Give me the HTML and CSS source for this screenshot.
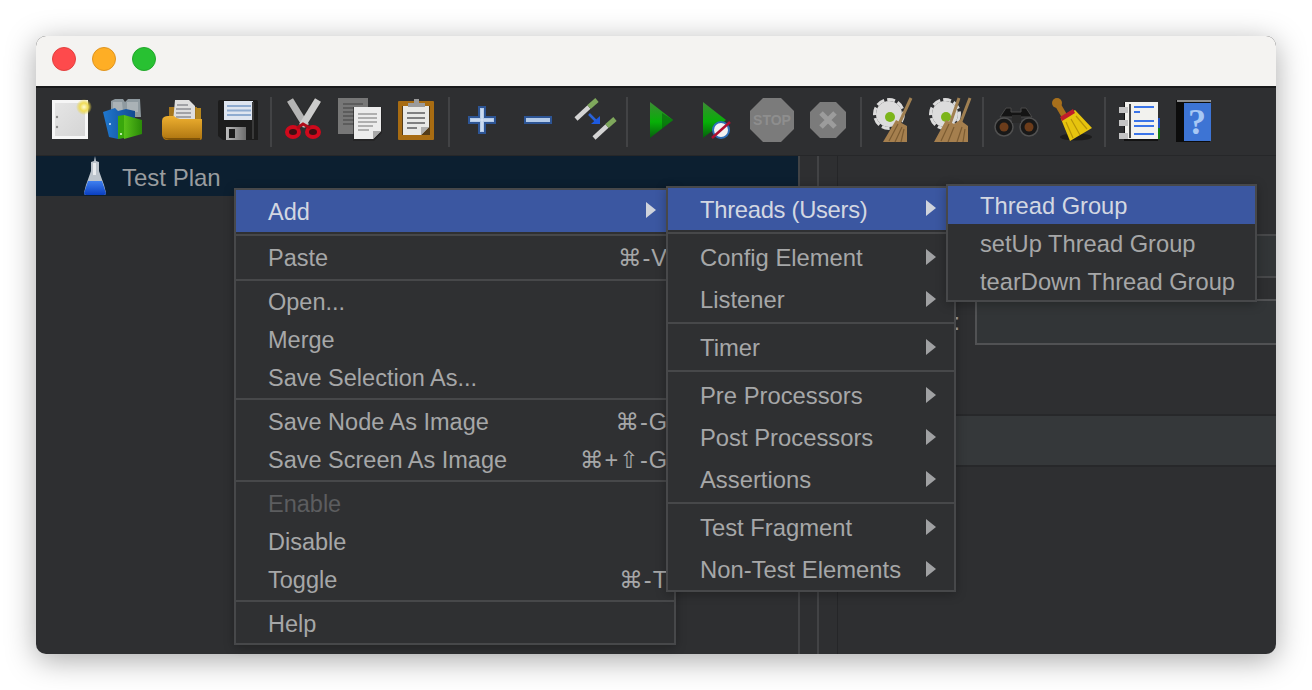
FILE: index.html
```html
<!DOCTYPE html>
<html lang="en">
<head>
<meta charset="utf-8">
<title>Apache JMeter</title>
<link rel="stylesheet" href="styles.css">
</head>
<body>
<div class="window">
  <header class="titlebar">
    <span class="light red"></span><span class="light yellow"></span><span class="light green"></span>
  </header>
  <nav class="toolbar">
    <span class="tool"><svg class="icon" viewBox="0 0 44 44"><defs><linearGradient id="g1" x1="0" y1="0" x2="1" y2="1"><stop offset="0" stop-color="#e6e6e6"/><stop offset="1" stop-color="#d4d4d4"/></linearGradient><radialGradient id="g1b"><stop offset="0" stop-color="#fffbd0"/><stop offset=".5" stop-color="#f0dc58"/><stop offset="1" stop-color="#e8d23c" stop-opacity="0"/></radialGradient></defs><rect x="4" y="3" width="36" height="38" fill="#202020"/><rect x="5.5" y="3.5" width="33" height="36" fill="url(#g1)" stroke="#f6f6f6" stroke-width="3"/><circle cx="9" cy="19" r="1.2" fill="#8a8a8a"/><circle cx="9" cy="29" r="1.2" fill="#8a8a8a"/><circle cx="36" cy="9" r="8" fill="url(#g1b)"/></svg></span>
    <span class="tool"><svg class="icon" viewBox="0 0 44 44"><defs><linearGradient id="g2" x1="0" y1="0" x2="1" y2="0"><stop offset="0" stop-color="#1f78d0"/><stop offset="1" stop-color="#124a90"/></linearGradient><linearGradient id="g2b" x1="0" y1="0" x2="1" y2="0"><stop offset="0" stop-color="#58c01a"/><stop offset="1" stop-color="#2a8a08"/></linearGradient></defs><path d="M7 3l4-2h8l2 3 3-3h12l1 18H7z" fill="#8f9aa0"/><path d="M9 4h9l1 10H9zM23 4h11l0 10H23z" fill="#aab2b6"/><path d="M-1 14l12-4 3 3 8-2 9 2v24L14 41l-9-2z" fill="url(#g2)"/><path d="M14 18l6-1v23l-6 1z" fill="#39a70c"/><path d="M20 17l18 5v14l-18 5z" fill="url(#g2b)"/><circle cx="17" cy="36" r="1" fill="#e8ffe0"/><circle cx="6" cy="26" r="1" fill="#cfe4ff"/></svg></span>
    <span class="tool"><svg class="icon" viewBox="0 0 44 44"><defs><linearGradient id="g3" x1="0" y1="0" x2="0" y2="1"><stop offset="0" stop-color="#eeb030"/><stop offset="1" stop-color="#ad7410"/></linearGradient></defs><path d="M9 9h28v14H9z" fill="#a5761c"/><rect x="36" y="10" width="5" height="24" fill="#b5861e"/><path d="M15 2h14l6 6v16H13z" fill="#dedede"/><path d="M17 7h11M16 11h15M16 15h15M16 19h15" stroke="#8d8f94" stroke-width="1.4"/><path d="M4 19q2-1 4-1l6 0q3 3 6 3h22v19q0 2-2 2H7q-4 0-5-5v-14q0-3 2-4z" fill="url(#g3)"/><path d="M3 39q3 3 6 3h31v-2H6z" fill="#7e5208"/></svg></span>
    <span class="tool"><svg class="icon" viewBox="0 0 44 44"><defs><linearGradient id="g4" x1="0" y1="0" x2="1" y2="0"><stop offset="0" stop-color="#bcbcbc"/><stop offset="1" stop-color="#6c6c6c"/></linearGradient></defs><path d="M4 2h36q2 0 2 2v38H7l-5-4V4q0-2 2-2z" fill="#1c1c1c"/><rect x="8" y="3" width="29" height="19" fill="#dee5f0"/><path d="M11 8h24M11 12.500h24M11 17h24" stroke="#8eabd0" stroke-width="2"/><rect x="10" y="29" width="20" height="13" fill="url(#g4)"/><rect x="13" y="31" width="6" height="9" fill="#1c1c1c"/><rect x="36" y="4" width="2" height="37" fill="#3a3a3a"/></svg></span>
    <span class="sep"></span>
    <span class="tool"><svg class="icon" viewBox="0 0 44 44"><path d="M8 2L24 28" stroke="#2c2c2c" stroke-width="9"/><path d="M36 2L20 28" stroke="#2c2c2c" stroke-width="9"/><path d="M8 2L24 28" stroke="#b4b4b4" stroke-width="7"/><path d="M36 2L20 28" stroke="#cccccc" stroke-width="7"/><ellipse cx="11" cy="34" rx="6" ry="5" fill="#3a1013" stroke="#d0091c" stroke-width="4"/><ellipse cx="31" cy="34" rx="6" ry="5" fill="#3a1013" stroke="#d0091c" stroke-width="4"/><path d="M15 30l6-4 7 4" fill="none" stroke="#b00a18" stroke-width="3"/></svg></span>
    <span class="tool"><svg class="icon" viewBox="0 0 44 44"><rect x="0" y="0" width="30" height="36" fill="#777"/><path d="M5 6h20M5 10h20M5 14h20M5 18h15M5 22h15M5 26h15" stroke="#5c5c5c" stroke-width="2"/><path d="M15 9h29v26l-8 8H15z" fill="#1f1f1f" opacity=".6"/><path d="M16 9h27v24l-8 8H16z" fill="#ececec"/><path d="M20 16h19M20 20h19M20 24h19M20 28h15M20 32h11" stroke="#9a9a9a" stroke-width="1.600"/><path d="M43 33h-8v8z" fill="#a8a8a8"/></svg></span>
    <span class="tool"><svg class="icon" viewBox="0 0 44 44"><rect x="4" y="3" width="36" height="39" rx="1" fill="#a86c12"/><rect x="8" y="8" width="28" height="29" fill="#1d1d1d" opacity=".6"/><path d="M9 8h26v21l-8 8H9z" fill="#e9e9e6"/><path d="M13 15h18M13 20h18M13 25h18M13 30h10" stroke="#808080" stroke-width="2"/><path d="M35 29h-8v8z" fill="#b0b0ae"/><path d="M14 9v-4h6v-4h5v4h6v4z" fill="#9b9b9b"/></svg></span>
    <span class="sep"></span>
    <span class="tool"><svg class="icon" viewBox="0 0 44 44"><path d="M19 9h6v10h10v6H25v10h-6V25H9v-6h10z" fill="#b4cbe9" stroke="#2d5595" stroke-width="2"/><path d="M22 11v22M11 22h22" stroke="#dae6f5" stroke-width="1.200"/></svg></span>
    <span class="tool"><svg class="icon" viewBox="0 0 44 44"><rect x="9" y="19" width="26" height="6" fill="#b4cbe9" stroke="#2d5595" stroke-width="2"/></svg></span>
    <span class="tool"><svg class="icon" viewBox="0 0 44 44"><path d="M4 21L17 9" stroke="#d4d4d4" stroke-width="4.500"/><path d="M17 9l8-7" stroke="#7fa85c" stroke-width="5"/><path d="M22 40L35 28" stroke="#d4d4d4" stroke-width="4.500"/><path d="M35 28l8-7" stroke="#7fa85c" stroke-width="5"/><path d="M17 16l8 8" stroke="#2a62d8" stroke-width="2.500"/><path d="M19 26h9v-8z" fill="#1d5ae0"/></svg></span>
    <span class="sep"></span>
    <span class="tool"><svg class="icon" viewBox="0 0 44 44"><defs><linearGradient id="g11" x1="0" y1="0" x2="0" y2="1"><stop offset="0" stop-color="#3d8a35"/><stop offset=".55" stop-color="#07b007"/><stop offset="1" stop-color="#075e0e"/></linearGradient></defs><path d="M12 4L35 22 12 40z" fill="url(#g11)"/><path d="M24 15L35 22 24 31z" fill="#0b5a10" opacity=".55"/></svg></span>
    <span class="tool"><svg class="icon" viewBox="0 0 44 44"><defs><linearGradient id="g12" x1="0" y1="0" x2="0" y2="1"><stop offset="0" stop-color="#3d8a35"/><stop offset=".55" stop-color="#07b007"/><stop offset="1" stop-color="#075e0e"/></linearGradient></defs><path d="M9 4L32 22 9 40z" fill="url(#g12)"/><circle cx="27" cy="32" r="8" fill="#f2f2f2" stroke="#2d6fb8" stroke-width="2"/><path d="M18 40L36 24" stroke="#b01030" stroke-width="2.500"/></svg></span>
    <span class="tool"><svg class="icon" viewBox="0 0 44 44"><path d="M13 0h18l13 13v18L31 44H13L0 31V13z" fill="#7b7b7b"/><text class="stoptext" x="22" y="27">STOP</text></svg></span>
    <span class="tool"><svg class="icon" viewBox="0 0 44 44"><path d="M14 4h16l10 10v16L30 40H14L4 30V14z" fill="#7b7b7b"/><path d="M15 15l14 14M29 15L15 29" stroke="#9c9c9c" stroke-width="5"/></svg></span>
    <span class="sep"></span>
    <span class="tool"><svg class="icon" viewBox="0 0 44 44"><circle cx="17" cy="16" r="13" fill="#dcdcdc"/><circle cx="17" cy="16" r="14.500" fill="none" stroke="#dcdcdc" stroke-width="3" stroke-dasharray="8 3"/><circle cx="18" cy="19" r="5" fill="#7cb51a"/><path d="M39 0L27 26" stroke="#a08052" stroke-width="3"/><path d="M11 44l13-22 11 6v16z" fill="#a57f4e"/><path d="M17 43l9-17M23 44l7-15M29 44l3-13" stroke="#7c5c32" stroke-width="1.200"/></svg></span>
    <span class="tool"><svg class="icon" viewBox="0 0 44 44"><circle cx="17" cy="16" r="13" fill="#dcdcdc"/><circle cx="17" cy="16" r="14.500" fill="none" stroke="#dcdcdc" stroke-width="3" stroke-dasharray="8 3"/><circle cx="18" cy="19" r="5" fill="#7cb51a"/><path d="M31 0L22 26M42 0L32 26" stroke="#a08052" stroke-width="3"/><path d="M6 44l12-22 8 4 6-4 8 6v16z" fill="#a57f4e"/><path d="M13 43l8-17M20 44l6-15M29 44l5-15M35 44l2-13" stroke="#7c5c32" stroke-width="1.200"/></svg></span>
    <span class="sep"></span>
    <span class="tool"><svg class="icon" viewBox="0 0 44 44"><path d="M6 19l6-9h5v4h10v-4h5l6 9z" fill="#141414" stroke="#4a4a4a" stroke-width="1"/><circle cx="10" cy="29" r="9" fill="#181818" stroke="#505050" stroke-width="1.500"/><circle cx="35" cy="29" r="9" fill="#181818" stroke="#505050" stroke-width="1.500"/><circle cx="10" cy="29" r="4.500" fill="#6c3c1a"/><circle cx="35" cy="29" r="4.500" fill="#6c3c1a"/><rect x="18" y="17" width="9" height="8" fill="#2a2a2a"/></svg></span>
    <span class="tool"><svg class="icon" viewBox="0 0 44 44"><ellipse cx="26" cy="39" rx="16" ry="3.500" fill="#1c1c1c"/><circle cx="7" cy="5" r="5" fill="#a8701c"/><path d="M8 7l7 12" stroke="#a8701c" stroke-width="6"/><path d="M11 21l14-9 17 18-22 13z" fill="#e6c40e"/><path d="M16 24l7 16M21 21l9 16M26 18l11 13" stroke="#b89508" stroke-width="1.200"/><path d="M10 19l13-8 2 4-13 8z" fill="#c01c2a"/></svg></span>
    <span class="sep"></span>
    <span class="tool"><svg class="icon" viewBox="0 0 44 44"><rect x="36" y="20" width="8" height="10" fill="#2050c0"/><rect x="36" y="30" width="8" height="11" fill="#118011"/><rect x="8" y="4" width="34" height="39" fill="#131313"/><rect x="9" y="4" width="33" height="37" fill="#f2f2ee"/><rect x="3" y="9" width="9" height="6" fill="#c4c4c4"/><rect x="3" y="22" width="9" height="6" fill="#c4c4c4"/><rect x="3" y="35" width="9" height="6" fill="#c4c4c4"/><path d="M14 6v34" stroke="#111" stroke-width="1.500"/><path d="M18 9h20M18 14h6M18 23h20M18 28h20M18 36h20" stroke="#3a74e8" stroke-width="2"/></svg></span>
    <span class="tool"><svg class="icon" viewBox="0 0 44 44"><rect x="4" y="2" width="34" height="42" fill="#0c0c0c"/><path d="M5 3h34" stroke="#b8b8b8" stroke-width="1.500"/><rect x="12" y="5" width="27" height="38" fill="#3d74d4"/><text class="helptext" x="25" y="36">?</text></svg></span>
  </nav>
  <main class="content">
    <section class="tree">
      <div class="tree-row">
        <svg class="flask" viewBox="0 0 24 40"><defs><linearGradient id="gf" x1="0" y1="0" x2="0" y2="1"><stop offset="0" stop-color="#3f80f0"/><stop offset="1" stop-color="#0a3fc0"/></linearGradient></defs><path d="M12 0l1 5 3 1v9l5 14 2 8q0 2-2 2H3q-2 0-2-2l2-8 5-14V6l3-1z" fill="#bcc4cc"/><path d="M10 7h3v12h-3z" fill="#e8ebee"/><path d="M5 25h14l4 12q0 2-2 2H3q-2 0-2-2z" fill="url(#gf)"/></svg>
        <span class="tree-label">Test Plan</span>
      </div>
    </section>
    <div class="gutter"></div>
    <div class="gutter2"></div>
    <section class="detail">
      <div class="title">Test Plan</div>
      <div class="form-row name-row"><span class="label">Name:</span><div class="name-input"></div></div>
      <div class="form-row comment-row"><span class="label">Comments:</span><div class="comment-input"></div></div>
      <div class="band"></div>
    </section>
  </main>

  <div class="menu main-menu">
    <div class="row tall hl"><span>Add</span><i class="arrow"></i></div>
    <div class="line first"></div>
    <div class="row tall"><span>Paste</span><span class="key">⌘-V</span></div>
    <div class="line flush"></div>
    <div class="row"><span>Open...</span></div>
    <div class="row"><span>Merge</span></div>
    <div class="row"><span>Save Selection As...</span></div>
    <div class="line"></div>
    <div class="row"><span>Save Node As Image</span><span class="key">⌘-G</span></div>
    <div class="row"><span>Save Screen As Image</span><span class="key">⌘+⇧-G</span></div>
    <div class="line"></div>
    <div class="row disabled"><span>Enable</span></div>
    <div class="row"><span>Disable</span></div>
    <div class="row"><span>Toggle</span><span class="key">⌘-T</span></div>
    <div class="line"></div>
    <div class="row"><span>Help</span></div>
  </div>

  <div class="menu sub-one">
    <div class="row tall hl"><span class="tight">Threads (Users)</span><i class="arrow"></i></div>
    <div class="line after-hl"></div>
    <div class="row tall"><span>Config Element</span><i class="arrow"></i></div>
    <div class="row tall"><span>Listener</span><i class="arrow"></i></div>
    <div class="line"></div>
    <div class="row tall"><span>Timer</span><i class="arrow"></i></div>
    <div class="line"></div>
    <div class="row tall"><span>Pre Processors</span><i class="arrow"></i></div>
    <div class="row tall"><span>Post Processors</span><i class="arrow"></i></div>
    <div class="row tall"><span>Assertions</span><i class="arrow"></i></div>
    <div class="line"></div>
    <div class="row tall"><span>Test Fragment</span><i class="arrow"></i></div>
    <div class="row tall"><span>Non-Test Elements</span><i class="arrow"></i></div>
  </div>

  <div class="menu sub-two">
    <div class="row hl"><span>Thread Group</span></div>
    <div class="row"><span>setUp Thread Group</span></div>
    <div class="row"><span>tearDown Thread Group</span></div>
  </div>
</div>
</body>
</html>
```
FILE: styles.css
```css
* { box-sizing: border-box; }
html, body { margin: 0; height: 100%; background: #fff; overflow: hidden; }
body {
  padding: 36px;
  font-family: "Liberation Sans", Arial, sans-serif;
  font-size: 23.5px;
  color: #a6a7a8;
}
.window {
  position: relative;
  width: 1240px;
  height: 618px;
  display: flex;
  flex-direction: column;
  border-radius: 10px;
  background: #2e2f31;
  box-shadow: 0 6px 30px rgba(0, 0, 0, .34);
}
.titlebar {
  flex: none;
  height: 50px;
  display: flex;
  align-items: center;
  gap: 16px;
  padding-left: 16px;
  padding-bottom: 5px;
  background: #f4f3f1;
  border-radius: 10px 10px 0 0;
}
.light { width: 24px; height: 24px; border-radius: 50%; border: 1px solid; }
.red { background: #fe4a4c; border-color: #e2403f; }
.yellow { background: #feae25; border-color: #df9420; }
.green { background: #28c132; border-color: #22a82b; }
.toolbar {
  flex: none;
  height: 70px;
  display: flex;
  align-items: center;
  padding-left: 6px;
  padding-bottom: 4px;
  background: #2e2f31;
  border-top: 2px solid #191a1b;
  border-bottom: 1px solid #262729;
}
.tool { width: 56px; display: flex; justify-content: center; }
.icon { width: 44px; height: 44px; display: block; overflow: visible; }
.sep { width: 2px; height: 50px; margin: 4px 4px 0; background: #424345; }
.stoptext { font: bold 14px "Liberation Sans", sans-serif; fill: #8e8e8e; text-anchor: middle; }
.helptext { font: bold 36px "Liberation Serif", serif; fill: #a8c8f4; text-anchor: middle; }
.content { flex: 1; display: flex; min-height: 0; }
.tree { width: 762px; flex: none; }
.tree-row {
  height: 40px;
  display: flex;
  align-items: center;
  gap: 15px;
  padding-left: 47px;
  background: #0c1f30;
  color: #999c9f;
  font-size: 24px;
}
.tree-label { padding-top: 4px; }
.flask { width: 24px; height: 40px; }
.gutter { width: 19px; flex: none; border-left: 2px solid #424345; }
.gutter2 { width: 21px; flex: none; border-left: 2px solid #424345; border-right: 1px solid #252628; }
.detail { flex: 1; min-width: 0; display: flex; flex-direction: column; }
.title { height: 78px; padding-top: 27px; line-height: 27px; margin-left: -2px; }
.form-row { display: flex; align-items: center; }
.label { text-align: right; width: 122px; margin-right: 15px; color: #a6a7a8; }
.name-row { height: 65px; padding-bottom: 21px; }
.name-input { flex: 1; height: 44px; margin-left: -36px; border-top: 2px solid #47484a; border-bottom: 2px solid #47484a; background: #323537; }
.comment-row { height: 46px; }
.comment-input { flex: 1; height: 46px; border: 2px solid #515254; border-right: 0; background: #323537; }
.band { height: 53px; margin-top: 69px; border-top: 2px solid #27282a; border-bottom: 2px solid #27282a; background: #35383a; }
.menu {
  position: absolute;
  background: #2f3032;
  border: 2px solid #47484a;
  box-shadow: 0 2px 10px rgba(0, 0, 0, .28);
}
.main-menu { left: 198px; top: 152px; width: 442px; }
.sub-one { left: 630px; top: 150px; width: 290px; height: 406px; font-size: 23.8px; }
.sub-two { left: 910px; top: 148px; width: 311px; font-size: 23.7px; }
.tight { letter-spacing: -.3px; }
.row {
  height: 38px;
  display: flex;
  align-items: center;
  justify-content: space-between;
  padding: 0 18px 0 32px;
  white-space: nowrap;
}
.tall { height: 42px; }
.hl { background: #3b57a1; color: #d3d7e2; padding-top: 2px; }
.disabled { color: #5c5d5f; }
.key { margin-right: -12px; letter-spacing: 1px; font-family: "Liberation Sans", "DejaVu Sans", sans-serif; }
.arrow {
  width: 0;
  height: 0;
  margin-top: -3px;
  border-left: 10px solid #a0a1a3;
  border-top: 8px solid transparent;
  border-bottom: 8px solid transparent;
}
.hl .arrow { border-left-color: #cfd3dc; margin-top: -5px; }
.line { height: 2px; margin: 1px 0 3px; background: #47484a; }
.line.first { margin: 2px 0 1px; }
.line.flush { margin: 0 0 2px; }
.line.after-hl { margin: 2px 0 3px; }
.sub-two .row { padding-top: 2px; }
```
